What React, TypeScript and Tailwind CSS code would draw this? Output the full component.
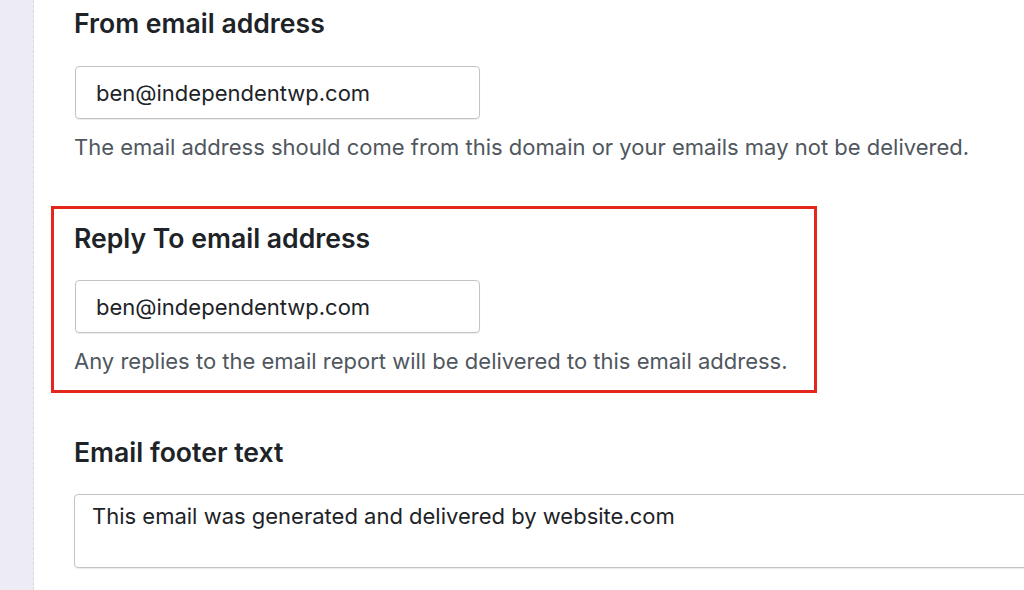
export default function App() {
  return (
    <div className="flex min-h-[590px] w-[1024px] overflow-hidden bg-white font-['Inter',sans-serif]">
      <div className="w-[34px] shrink-0 border-r border-dashed border-[#d9d8e3] bg-[#edecf4]" />

      <div className="flex flex-col pl-[40px] pt-[7px]">
        <section>
          <h2 className="text-[26.6px] leading-[32px] font-semibold text-[#1d2327]">From email address</h2>
          <input
            readOnly
            value="ben@independentwp.com"
            className="mt-[27px] ml-px h-[53px] w-[405px] rounded-[4px] border border-[#c3c4c7] px-[20px] text-[22px] text-[#1d2327] shadow-[0_1px_1px_rgba(0,0,0,0.08)] outline-none"
          />
          <p className="mt-[12px] text-[22px] leading-[32px] text-[#50575e]">
            The email address should come from this domain or your emails may not be delivered.
          </p>
        </section>

        <section className="mt-[43px] -ml-[23px] w-[766px] border-[3px] border-[#e5261c] pt-[13px] pb-[13px] pl-[20px]">
          <h2 className="text-[26.6px] leading-[32px] font-semibold text-[#1d2327]">Reply To email address</h2>
          <input
            readOnly
            value="ben@independentwp.com"
            className="mt-[26px] ml-px h-[53px] w-[405px] rounded-[4px] border border-[#c3c4c7] px-[20px] text-[22px] text-[#1d2327] shadow-[0_1px_1px_rgba(0,0,0,0.08)] outline-none"
          />
          <p className="mt-[12px] text-[22px] leading-[32px] text-[#50575e]">
            Any replies to the email report will be delivered to this email address.
          </p>
        </section>

        <section className="mt-[43px]">
          <h2 className="text-[26.6px] leading-[32px] font-semibold text-[#1d2327]">Email footer text</h2>
          <textarea
            readOnly
            value="This email was generated and delivered by website.com"
            className="mt-[26px] block h-[74px] w-[1000px] resize-none rounded-[4px] border border-[#c3c4c7] px-[17px] py-[6px] text-[22px] leading-[30px] text-[#1d2327] shadow-[0_1px_1px_rgba(0,0,0,0.08)] outline-none"
          />
        </section>
      </div>
    </div>
  )
}
